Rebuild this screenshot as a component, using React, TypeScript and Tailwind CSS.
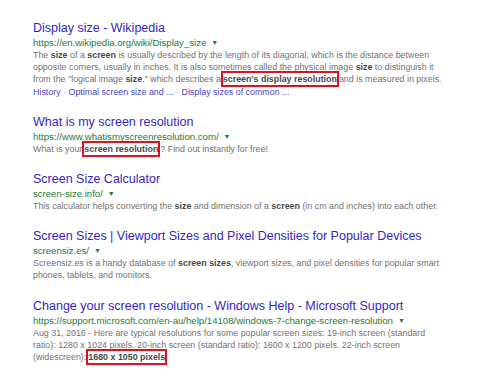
import React from 'react';

const Box: React.FC<{ children: React.ReactNode }> = ({ children }) => (
  <span className="border-2 border-[#e0101c] py-[1px] font-bold text-[#4a4a4a]">{children}</span>
);

const B: React.FC<{ children: React.ReactNode }> = ({ children }) => (
  <b className="font-bold text-[#4a4a4a]">{children}</b>
);

const Result: React.FC<{ title: string; url: string; children: React.ReactNode; links?: string[] }> = ({
  title,
  url,
  children,
  links,
}) => (
  <div className="flex flex-col">
    <a className="text-[12.5px] leading-[15px] text-[#3526c2] whitespace-nowrap">{title}</a>
    <div className="flex items-center gap-[5px] text-[9.6px] leading-[13px] text-[#1d7a35] whitespace-nowrap">
      <span>{url}</span>
      <span className="text-[7px] text-[#1d7a35]">▼</span>
    </div>
    <p className="text-[8.9px] leading-[12.2px] text-[#727272]">{children}</p>
    {links && (
      <div className="text-[8.9px] leading-[12.2px] text-[#4b3fc6]">
        {links.map((l, i) => (
          <span key={l}>
            {i > 0 && <span className="text-[#888]"> · </span>}
            {l}
          </span>
        ))}
      </div>
    )}
  </div>
);

export default function App() {
  return (
    <div className="w-[480px] h-[377px] bg-white overflow-hidden font-['Liberation_Sans',Arial,sans-serif]">
      <div className="pl-[33px] pt-[21px] w-[446px] flex flex-col gap-[17px]">
        <Result
          title="Display size - Wikipedia"
          url="https://en.wikipedia.org/wiki/Display_size"
          links={['History', 'Optimal screen size and ...', 'Display sizes of common ...']}
        >
          The <B>size</B> of a <B>screen</B> is usually described by the length of its diagonal, which is the distance between
          opposite corners, usually in inches. It is also sometimes called the physical image <B>size</B> to distinguish it
          from the "logical image <B>size</B>," which describes a<Box>screen's display resolution</Box>and is measured in pixels.
        </Result>
        <Result title="What is my screen resolution" url="https://www.whatismyscreenresolution.com/">
          What is your<Box>screen resolution</Box>? Find out instantly for free!
        </Result>
        <Result title="Screen Size Calculator" url="screen-size.info/">
          This calculator helps converting the <B>size</B> and dimension of a <B>screen</B> (in cm and inches) into each other.
        </Result>
        <Result title="Screen Sizes | Viewport Sizes and Pixel Densities for Popular Devices" url="screensiz.es/">
          Screensiz.es is a handy database of <B>screen sizes</B>, viewport sizes, and pixel densities for popular smart
          phones, tablets, and monitors.
        </Result>
        <Result
          title="Change your screen resolution - Windows Help - Microsoft Support"
          url="https://support.microsoft.com/en-au/help/14108/windows-7-change-screen-resolution"
        >
          Aug 31, 2016 - Here are typical resolutions for some popular screen sizes: 19-inch screen (standard
          ratio): 1280 x 1024 pixels. 20-inch screen (standard ratio): 1600 x 1200 pixels. 22-inch screen
          (widescreen):<Box>1680 x 1050 pixels</Box>
        </Result>
      </div>
    </div>
  );
}
